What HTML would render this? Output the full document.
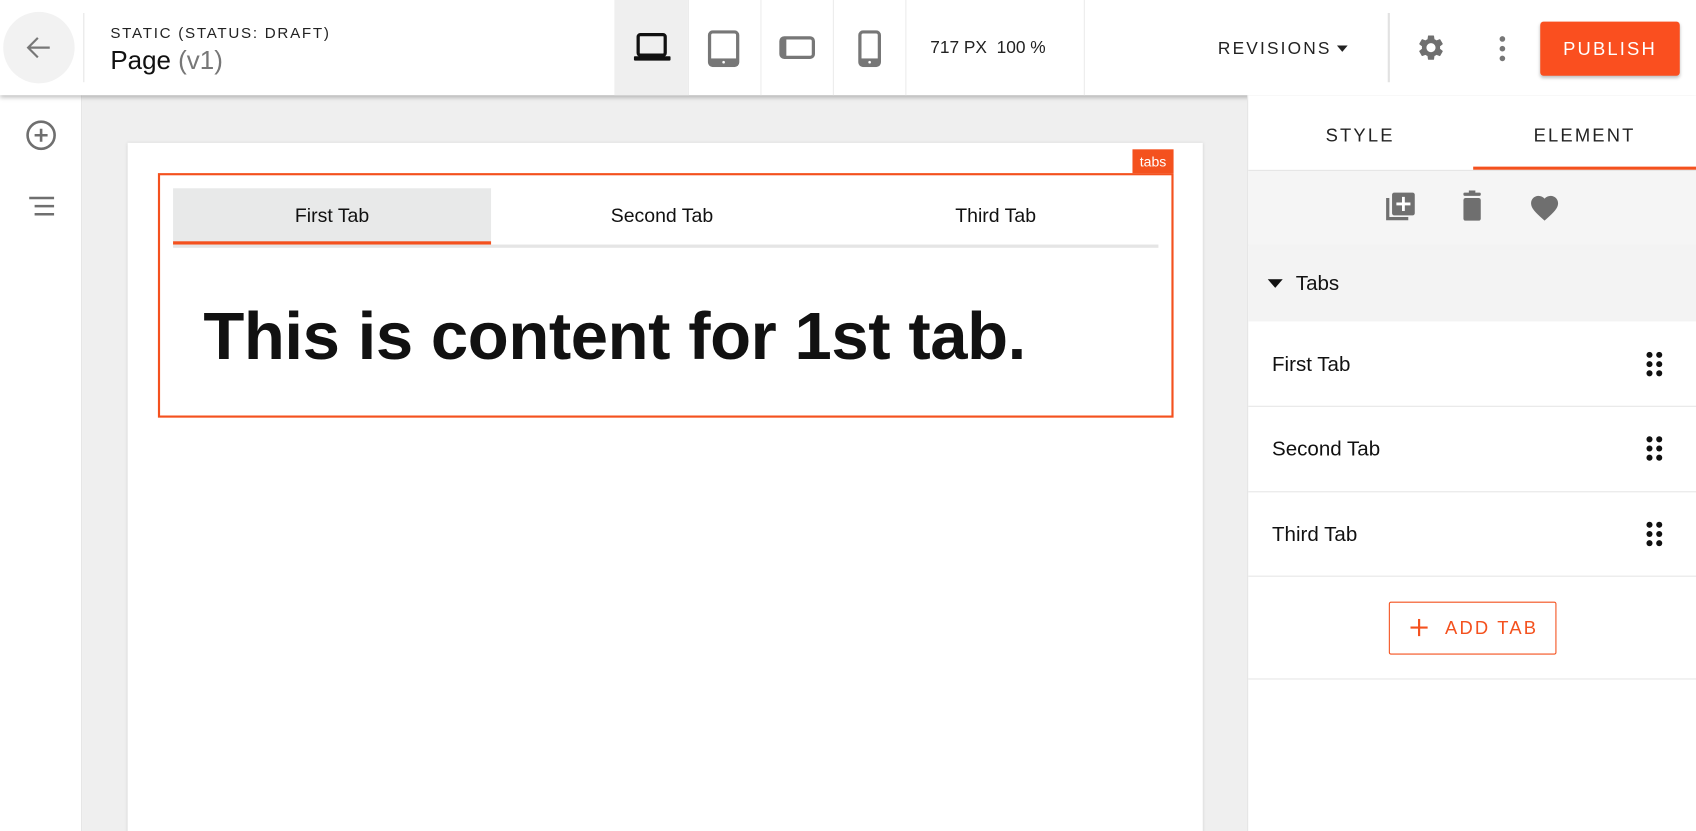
<!DOCTYPE html>
<html><head><meta charset="utf-8"><style>
html,body{margin:0;padding:0;width:1696px;height:831px;overflow:hidden;background:#fff;font-family:"Liberation Sans",sans-serif;}
#w{position:absolute;left:0;top:0;width:1568px;height:768px;transform:scale(1.08163,1.08203);transform-origin:0 0;overflow:hidden;background:#fff;}
.a{position:absolute;}
.t{position:absolute;white-space:nowrap;}
</style></head><body><div id="w">
<div class="a" style="left:76px;top:88px;width:1077px;height:680px;background:#efefef"></div>
<div class="a" style="left:118px;top:132px;width:994px;height:640px;background:#fff;box-shadow:0 0 3px rgba(0,0,0,.12)"></div>
<div class="a" style="left:0;top:88px;width:75px;height:680px;background:#fff;border-right:1px solid #e3e3e3"></div>
<svg class="a" style="left:24px;top:111px" width="28" height="28" viewBox="0 0 28 28"><circle cx="14" cy="14" r="12.5" fill="none" stroke="#6f6f6f" stroke-width="2.4"/><path d="M14 8v12M8 14h12" stroke="#6f6f6f" stroke-width="2.4"/></svg>
<svg class="a" style="left:26px;top:181px" width="26" height="20" viewBox="0 0 26 20"><path d="M1 2h23M6 9.5h18M6 17h18" stroke="#6f6f6f" stroke-width="2.4"/></svg>
<div class="a" style="left:0;top:0;width:1568px;height:88px;background:#fff;box-shadow:0 2px 4px rgba(0,0,0,.25)"></div>
<div class="a" style="left:3px;top:11px;width:66px;height:66px;border-radius:50%;background:#f2f2f2"></div>
<svg class="a" style="left:24px;top:33px" width="24" height="22" viewBox="0 0 24 22"><path d="M22 11H3M11 2l-9 9 9 9" fill="none" stroke="#777" stroke-width="2"/></svg>
<div class="a" style="left:77px;top:12px;width:1px;height:64px;background:#e5e5e5"></div>
<div class="t" style="left:102px;top:22px;font-size:14px;letter-spacing:1.6px;color:#222">STATIC (STATUS: DRAFT)</div>
<div class="t" style="left:102px;top:43px;font-size:24px;color:#111">Page <span style="color:#777">(v1)</span></div>
<div class="a" style="left:568px;top:0;width:68px;height:88px;background:#efefef"></div>
<div class="a" style="left:636px;top:0;width:1px;height:88px;background:#ececec"></div>
<div class="a" style="left:703px;top:0;width:1px;height:88px;background:#ececec"></div>
<div class="a" style="left:770px;top:0;width:1px;height:88px;background:#ececec"></div>
<div class="a" style="left:837px;top:0;width:1px;height:88px;background:#ececec"></div>
<div class="a" style="left:1002px;top:0;width:1px;height:88px;background:#ececec"></div>
<svg class="a" style="left:586px;top:30px" width="34" height="28" viewBox="0 0 34 28"><rect x="4" y="2" width="25" height="19" rx="2" fill="none" stroke="#111" stroke-width="3"/><rect x="0" y="22" width="34" height="4" rx="1" fill="#111"/></svg>
<svg class="a" style="left:654px;top:28px" width="30" height="34" viewBox="0 0 30 34"><rect x="2" y="1.5" width="26" height="31" rx="3" fill="none" stroke="#777" stroke-width="3"/><rect x="2" y="26" width="26" height="7" fill="#777"/><circle cx="15" cy="29.5" r="1.2" fill="#fff"/></svg>
<svg class="a" style="left:720px;top:33px" width="34" height="22" viewBox="0 0 34 22"><rect x="2" y="2" width="30" height="18" rx="3" fill="none" stroke="#777" stroke-width="3"/><rect x="2" y="2" width="5" height="18" fill="#777"/></svg>
<svg class="a" style="left:793px;top:28px" width="22" height="34" viewBox="0 0 22 34"><rect x="2" y="1.5" width="18" height="31" rx="3" fill="none" stroke="#777" stroke-width="3"/><rect x="2" y="26" width="18" height="7" fill="#777"/><circle cx="11" cy="29.5" r="1.2" fill="#fff"/></svg>
<div class="t" style="left:860px;top:36px;font-size:16px;color:#222">717 PX&nbsp;&nbsp;100 %</div>
<div class="t" style="left:1126px;top:37px;font-size:16px;letter-spacing:2px;color:#222">REVISIONS</div>
<svg class="a" style="left:1236px;top:42px" width="10" height="6"><path d="M0 0h10L5 6z" fill="#222"/></svg>
<div class="a" style="left:1283px;top:12px;width:2px;height:64px;background:#e2e2e2"></div>
<svg class="a" style="left:1309px;top:30px" width="28" height="28" viewBox="0 0 24 24"><path fill="#6f6f6f" d="M19.14 12.94c.04-.3.06-.61.06-.94 0-.32-.02-.64-.07-.94l2.03-1.58a.49.49 0 0 0 .12-.61l-1.92-3.32a.488.488 0 0 0-.59-.22l-2.39.96c-.5-.38-1.030-.7-1.62-.94l-.36-2.54a.484.484 0 0 0-.48-.41h-3.84c-.24 0-.43.17-.47.41l-.36 2.54c-.59.24-1.13.57-1.62.94l-2.39-.96c-.22-.08-.47 0-.59.22L2.74 8.87c-.12.21-.08.47.12.61l2.03 1.58c-.05.3-.09.63-.09.94s.02.64.07.94l-2.03 1.58a.49.49 0 0 0-.12.61l1.92 3.32c.12.22.37.29.59.22l2.39-.96c.5.38 1.03.7 1.62.94l.36 2.54c.05.24.24.41.48.41h3.84c.24 0 .44-.17.47-.41l.36-2.54c.59-.24 1.13-.56 1.62-.94l2.39.96c.22.08.47 0 .59-.22l1.92-3.32c.12-.22.07-.47-.12-.61l-2.01-1.58zM12 15.6c-1.98 0-3.6-1.62-3.6-3.6s1.62-3.6 3.6-3.6 3.6 1.62 3.6 3.6-1.62 3.6-3.6 3.6z"/></svg>
<svg class="a" style="left:1385px;top:32px" width="8" height="26"><circle cx="4" cy="4" r="2.6" fill="#777"/><circle cx="4" cy="13" r="2.6" fill="#777"/><circle cx="4" cy="22" r="2.6" fill="#777"/></svg>
<div class="a" style="left:1424px;top:20px;width:129px;height:50px;background:#fa4f1f;border-radius:3px;box-shadow:0 2px 3px rgba(0,0,0,.25);color:#fff;font-size:17px;letter-spacing:2px;text-align:center;line-height:52px">PUBLISH</div>
<div class="a" style="left:146px;top:160px;width:935px;height:222px;border:2px solid #f4511e"></div>
<div class="a" style="left:1047px;top:138px;width:38px;height:22px;background:#f4511e;color:#fff;font-size:13px;text-align:center;line-height:23px">tabs</div>
<div class="a" style="left:160px;top:174px;width:294px;height:50px;background:#e8e9e9"></div>
<div class="a" style="left:160px;top:226px;width:911px;height:3px;background:#e5e5e5"></div>
<div class="a" style="left:160px;top:223px;width:294px;height:3px;background:#f4511e"></div>
<div class="t" style="left:160px;top:189px;width:294px;text-align:center;font-size:18px;color:#111">First Tab</div>
<div class="t" style="left:462px;top:189px;width:300px;text-align:center;font-size:18px;color:#111">Second Tab</div>
<div class="t" style="left:770px;top:189px;width:301px;text-align:center;font-size:18px;color:#111">Third Tab</div>
<div class="t" style="left:188px;top:276px;font-size:62px;font-weight:bold;color:#111;letter-spacing:-0.4px">This is content for 1st tab.</div>
<div class="a" style="left:1153px;top:88px;width:415px;height:680px;background:#fff;border-left:1px solid #e3e3e3"></div>
<div class="t" style="left:1154px;top:116px;width:207px;text-align:center;font-size:17px;letter-spacing:2px;color:#222">STYLE</div>
<div class="t" style="left:1362px;top:116px;width:206px;text-align:center;font-size:17px;letter-spacing:2px;color:#222">ELEMENT</div>
<div class="a" style="left:1362px;top:154px;width:206px;height:3px;background:#f4511e"></div>
<div class="a" style="left:1154px;top:157px;width:414px;height:68px;background:#f5f5f5;border-top:1px solid #e6e6e6;border-bottom:1px solid #e6e6e6"></div>
<svg class="a" style="left:1280px;top:176px" width="30" height="30" viewBox="0 0 30 30"><path d="M3 7v19h19" fill="none" stroke="#6f6f6f" stroke-width="3"/><rect x="7" y="2" width="21" height="21" rx="2" fill="#6f6f6f"/><path d="M17.5 6v13M11 12.5h13" stroke="#fff" stroke-width="2.6"/></svg>
<svg class="a" style="left:1351px;top:176px" width="20" height="28" viewBox="0 0 20 28"><rect x="2" y="2" width="16" height="3" rx="1" fill="#6f6f6f"/><rect x="7" y="0" width="6" height="3" fill="#6f6f6f"/><rect x="2" y="7" width="16" height="21" rx="2" fill="#6f6f6f"/></svg>
<svg class="a" style="left:1413px;top:177px" width="30" height="28" viewBox="0 0 24 22"><path fill="#6f6f6f" d="M12 21.35l-1.45-1.32C5.4 15.36 2 12.28 2 8.5 2 5.42 4.42 3 7.5 3c1.74 0 3.41.81 4.5 2.09C13.09 3.81 14.76 3 16.5 3 19.58 3 22 5.42 22 8.5c0 3.780-3.4 6.86-8.55 11.54L12 21.35z"/></svg>
<div class="a" style="left:1154px;top:226px;width:414px;height:71px;background:#f3f3f3"></div>
<svg class="a" style="left:1172px;top:258px" width="14" height="8"><path d="M0 0h14L7 8z" fill="#111"/></svg>
<div class="t" style="left:1198px;top:252px;font-size:19px;color:#111">Tabs</div>
<div class="t" style="left:1176px;top:327px;font-size:19px;color:#111">First Tab</div>
<div class="a" style="left:1154px;top:375px;width:414px;height:1px;background:#e6e6e6"></div>
<div class="t" style="left:1176px;top:405px;font-size:19px;color:#111">Second Tab</div>
<div class="a" style="left:1154px;top:454px;width:414px;height:1px;background:#e6e6e6"></div>
<div class="t" style="left:1176px;top:484px;font-size:19px;color:#111">Third Tab</div>
<div class="a" style="left:1154px;top:532px;width:414px;height:1px;background:#e6e6e6"></div>
<svg class="a" style="left:1522px;top:325px" width="16" height="23"><g fill="#111"><circle cx="3" cy="3" r="2.8"/><circle cx="12" cy="3" r="2.8"/><circle cx="3" cy="11.5" r="2.8"/><circle cx="12" cy="11.5" r="2.8"/><circle cx="3" cy="20" r="2.8"/><circle cx="12" cy="20" r="2.8"/></g></svg>
<svg class="a" style="left:1522px;top:403px" width="16" height="23"><g fill="#111"><circle cx="3" cy="3" r="2.8"/><circle cx="12" cy="3" r="2.8"/><circle cx="3" cy="11.5" r="2.8"/><circle cx="12" cy="11.5" r="2.8"/><circle cx="3" cy="20" r="2.8"/><circle cx="12" cy="20" r="2.8"/></g></svg>
<svg class="a" style="left:1522px;top:482px" width="16" height="23"><g fill="#111"><circle cx="3" cy="3" r="2.8"/><circle cx="12" cy="3" r="2.8"/><circle cx="3" cy="11.5" r="2.8"/><circle cx="12" cy="11.5" r="2.8"/><circle cx="3" cy="20" r="2.8"/><circle cx="12" cy="20" r="2.8"/></g></svg>
<div class="a" style="left:1284px;top:556px;width:153px;height:47px;border:1px solid #f4511e;border-radius:2px"></div>
<svg class="a" style="left:1304px;top:572px" width="16" height="16"><path d="M8 0v16M0 8h16" stroke="#f4511e" stroke-width="2"/></svg>
<div class="t" style="left:1336px;top:571px;font-size:17px;letter-spacing:2px;color:#f4511e">ADD TAB</div>
<div class="a" style="left:1154px;top:627px;width:414px;height:1px;background:#e6e6e6"></div>
</div></body></html>
